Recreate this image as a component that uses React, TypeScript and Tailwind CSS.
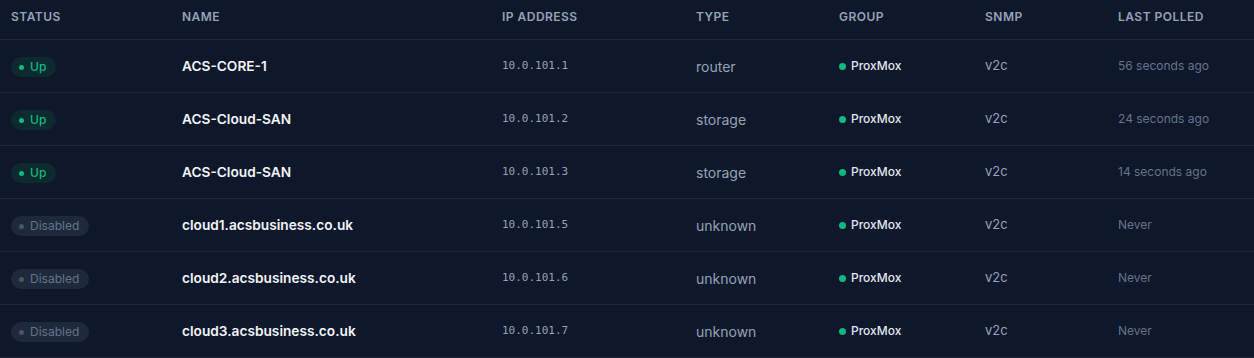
import React from 'react';

type Device = {
  up: boolean;
  name: string;
  ip: string;
  type: string;
  polled: string;
};

const devices: Device[] = [
  { up: true, name: 'ACS-CORE-1', ip: '10.0.101.1', type: 'router', polled: '56 seconds ago' },
  { up: true, name: 'ACS-Cloud-SAN', ip: '10.0.101.2', type: 'storage', polled: '24 seconds ago' },
  { up: true, name: 'ACS-Cloud-SAN', ip: '10.0.101.3', type: 'storage', polled: '14 seconds ago' },
  { up: false, name: 'cloud1.acsbusiness.co.uk', ip: '10.0.101.5', type: 'unknown', polled: 'Never' },
  { up: false, name: 'cloud2.acsbusiness.co.uk', ip: '10.0.101.6', type: 'unknown', polled: 'Never' },
  { up: false, name: 'cloud3.acsbusiness.co.uk', ip: '10.0.101.7', type: 'unknown', polled: 'Never' },
];

const cols = 'grid grid-cols-[171px_320px_194px_143px_146px_133px_1fr]';
const headers = ['Status', 'Name', 'IP Address', 'Type', 'Group', 'SNMP', 'Last Polled'];

function StatusBadge({ up }: { up: boolean }) {
  if (up) {
    return (
      <span className="inline-flex items-center gap-[6px] h-5 pl-[8px] pr-[10px] rounded-full bg-[#0d2a2e] text-[#10b981] text-[12px] font-medium">
        <span className="w-[5px] h-[5px] rounded-full bg-[#10b981]" />
        Up
      </span>
    );
  }
  return (
    <span className="inline-flex items-center gap-[6px] h-5 pl-[8px] pr-[10px] rounded-full bg-[#1e293b] text-[#64748b] text-[12px]">
      <span className="w-[5px] h-[5px] rounded-full bg-[#475569]" />
      Disabled
    </span>
  );
}

export default function App() {
  return (
    <div className="w-[1254px] h-[358px] bg-[#0f172a] font-['Inter',sans-serif] overflow-hidden">
      {/* Header */}
      <div className={`${cols} h-[40px] items-center border-b border-[#1e293b] pb-[6px]`}>
        {headers.map(h => (
          <div key={h} className="pl-[11px] text-[12px] font-semibold uppercase tracking-[0.04em] text-[#94a3b8]">
            {h}
          </div>
        ))}
      </div>

      {/* Rows */}
      {devices.map((d, i) => (
        <div key={i} className={`${cols} h-[53px] items-center border-b border-[#1e293b]`}>
          <div className="pl-[11px] flex mt-[2px]">
            <StatusBadge up={d.up} />
          </div>
          <div className="pl-[11px] text-[13.7px] font-semibold text-[#f1f5f9]">{d.name}</div>
          <div className="pl-[11px] text-[11px] font-['DejaVu_Sans_Mono',monospace] text-[#94a3b8]">{d.ip}</div>
          <div className="pl-[11px] text-[14px] text-[#94a3b8]">{d.type}</div>
          <div className="pl-[11px] flex items-center gap-[5px] text-[12px] font-medium text-[#e2e8f0]">
            <span className="w-[7px] h-[7px] rounded-full bg-[#10b981]" />
            ProxMox
          </div>
          <div className="pl-[11px] text-[13px] text-[#94a3b8]">v2c</div>
          <div className="pl-[11px] text-[12px] text-[#64748b]">{d.polled}</div>
        </div>
      ))}
    </div>
  );
}
